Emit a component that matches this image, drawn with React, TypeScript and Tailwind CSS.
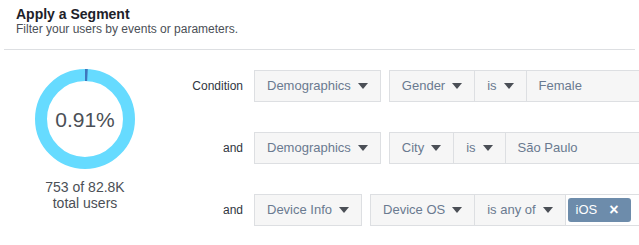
import React from "react";

const Caret = () => (
  <span className="inline-block w-0 h-0 border-l-[5px] border-r-[5px] border-t-[6px] border-l-transparent border-r-transparent border-t-[#4b4f56] ml-[7px]" />
);

const Box = ({ text, caret = true, first = false }: { text: string; caret?: boolean; first?: boolean }) => (
  <div
    className={`h-[32px] flex items-center px-[12px] bg-[#f6f6f6] border border-[#dddfe2] ${first ? "" : "-ml-px"} ${
      caret ? "" : "w-[200px] shrink-0"
    } text-[13px] text-[#6a7a90] whitespace-nowrap`}
  >
    <span>{text}</span>
    {caret && <Caret />}
  </div>
);

const Row = ({ label, children }: { label: string; children: React.ReactNode }) => (
  <div className="flex items-center h-[32px]">
    <div className="w-[77px] text-right text-[12px] text-[#2f3541] shrink-0">{label}</div>
    <div className="ml-[11px] flex items-center gap-[8px] flex-nowrap">{children}</div>
  </div>
);

export default function App() {
  const r = 44;
  const c = 2 * Math.PI * r;
  const pct = 0.0091;
  return (
    <div
      className="w-[639px] h-[245px] overflow-hidden bg-white px-[4px]"
      style={{ fontFamily: '"Liberation Sans", Arial, sans-serif' }}
    >
      <div className="pl-[12px] pt-[6px]">
        <div className="text-[14px] leading-[16px] font-bold text-[#1d2129]">Apply a Segment</div>
        <div className="text-[12px] leading-[14px] text-[#4b4f56]">Filter your users by events or parameters.</div>
      </div>
      <div className="mt-[13px] border-t border-[#dddfe2]" />
      <div className="flex">
        <div className="w-[162px] shrink-0 flex flex-col items-center pt-[19px]">
          <div className="relative w-[100px] h-[100px]">
            <svg width="100" height="100" viewBox="0 0 100 100">
              <circle cx="50" cy="50" r={r} fill="none" stroke="#66dbff" strokeWidth="12" />
              <circle
                cx="50"
                cy="50"
                r={r}
                fill="none"
                stroke="#3f77bd"
                strokeWidth="12"
                strokeDasharray={`${c * pct} ${c}`}
                transform="rotate(-90 50 50)"
              />
            </svg>
            <div className="absolute inset-0 flex items-center justify-center pt-[2px] text-[21px] text-[#4b4f56]">0.91%</div>
          </div>
          <div className="mt-[10px] text-[14px] leading-[16px] text-[#4b4f56] text-center">
            753 of 82.8K
            <br />
            total users
          </div>
        </div>
        <div className="flex flex-col gap-[30px] pt-[20px]">
          <Row label="Condition">
            <Box text="Demographics" first />
            <div className="flex">
              <Box text="Gender" first />
              <Box text="is" />
              <Box text="Female" caret={false} />
            </div>
          </Row>
          <Row label="and">
            <Box text="Demographics" first />
            <div className="flex">
              <Box text="City" first />
              <Box text="is" />
              <Box text="São Paulo" caret={false} />
            </div>
          </Row>
          <Row label="and">
            <Box text="Device Info" first />
            <div className="flex">
              <Box text="Device OS" first />
              <Box text="is any of" />
              <div className="-ml-px h-[32px] w-[200px] shrink-0 flex items-center pl-[2px] bg-white border border-[#dddfe2]">
                <div className="h-[24px] flex items-center pl-[8px] pr-[12px] rounded-[3px] bg-[#6d8cab] text-white text-[13px]">
                  <span>iOS</span>
                  <span className="ml-[12px] text-[16px] leading-none font-bold">×</span>
                </div>
              </div>
            </div>
          </Row>
        </div>
      </div>
    </div>
  );
}
